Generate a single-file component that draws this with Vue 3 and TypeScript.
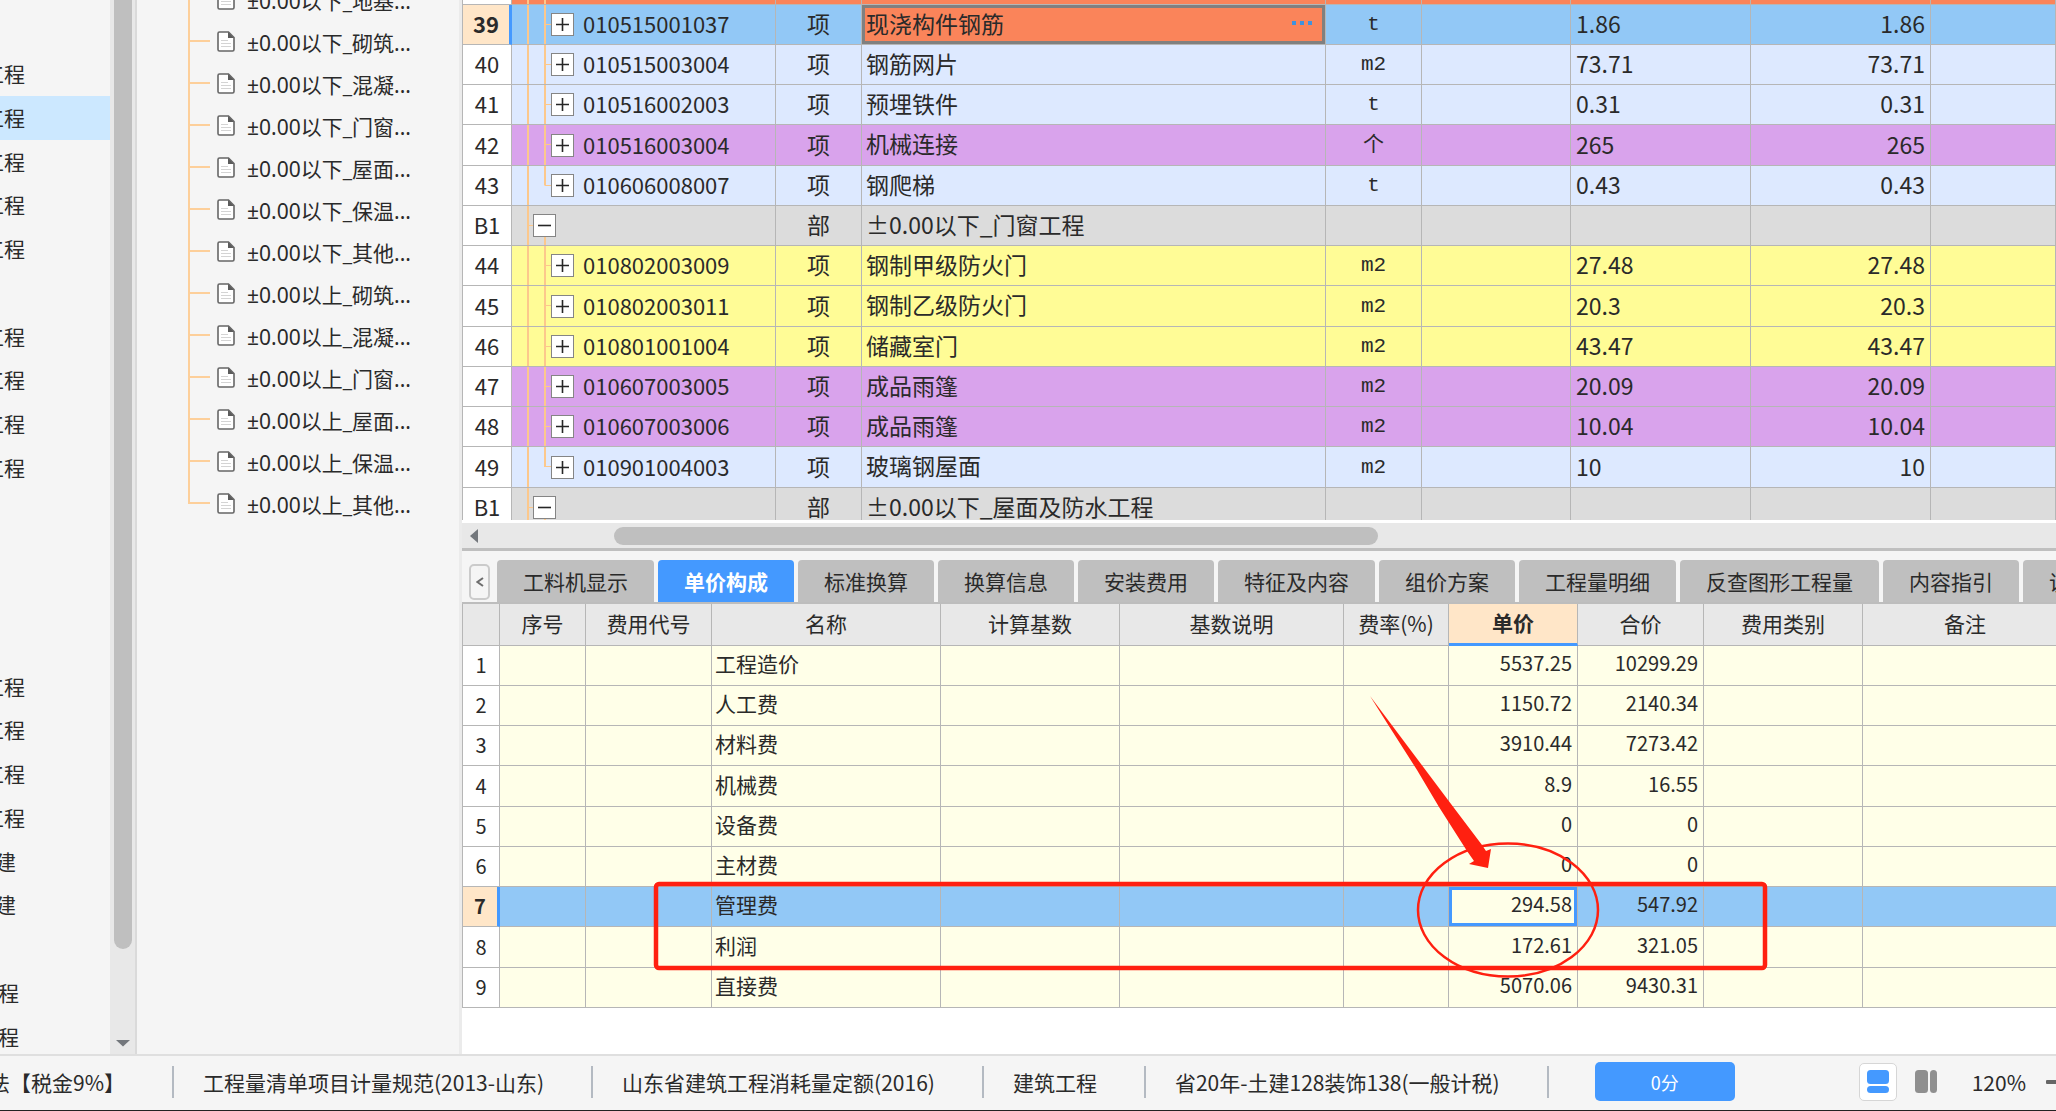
<script setup lang="ts">
type Tone = 'orange' | 'active' | 'blue' | 'purple' | 'yellow' | 'group'

interface BillRow {
  no: string
  tone: Tone
  code: string
  kind: string
  name: string
  unit: string
  qty: string
  last?: boolean
}

interface FeeRow {
  name: string
  price: string
  total: string
}

const projectRows: string[] = [
  '工程', '工程', '工程', '工程', '工程', '',
  '工程', '工程', '工程', '工程', '', '', '', '',
  '工程', '工程', '工程', '工程', '建', '建', '', '程', '程',
]
const selectedProject = 1
const projectClass = (t: string): string => (t === '建' ? 'cut-build' : t === '程' ? 'cut-tail' : 'cut-full')

const sections: string[] = [
  '±0.00以下_地基...', '±0.00以下_砌筑...', '±0.00以下_混凝...', '±0.00以下_门窗...',
  '±0.00以下_屋面...', '±0.00以下_保温...', '±0.00以下_其他...', '±0.00以上_砌筑...',
  '±0.00以上_混凝...', '±0.00以上_门窗...', '±0.00以上_屋面...', '±0.00以上_保温...',
  '±0.00以上_其他...',
]

const bill: BillRow[] = [
  { no: '', tone: 'orange', code: '', kind: '', name: '', unit: '', qty: '' },
  { no: '39', tone: 'active', code: '010515001037', kind: '项', name: '现浇构件钢筋', unit: 't', qty: '1.86' },
  { no: '40', tone: 'blue', code: '010515003004', kind: '项', name: '钢筋网片', unit: 'm2', qty: '73.71' },
  { no: '41', tone: 'blue', code: '010516002003', kind: '项', name: '预埋铁件', unit: 't', qty: '0.31' },
  { no: '42', tone: 'purple', code: '010516003004', kind: '项', name: '机械连接', unit: '个', qty: '265' },
  { no: '43', tone: 'blue', code: '010606008007', kind: '项', name: '钢爬梯', unit: 't', qty: '0.43', last: true },
  { no: 'B1', tone: 'group', code: '', kind: '部', name: '±0.00以下_门窗工程', unit: '', qty: '' },
  { no: '44', tone: 'yellow', code: '010802003009', kind: '项', name: '钢制甲级防火门', unit: 'm2', qty: '27.48' },
  { no: '45', tone: 'yellow', code: '010802003011', kind: '项', name: '钢制乙级防火门', unit: 'm2', qty: '20.3' },
  { no: '46', tone: 'yellow', code: '010801001004', kind: '项', name: '储藏室门', unit: 'm2', qty: '43.47' },
  { no: '47', tone: 'purple', code: '010607003005', kind: '项', name: '成品雨篷', unit: 'm2', qty: '20.09' },
  { no: '48', tone: 'purple', code: '010607003006', kind: '项', name: '成品雨篷', unit: 'm2', qty: '10.04' },
  { no: '49', tone: 'blue', code: '010901004003', kind: '项', name: '玻璃钢屋面', unit: 'm2', qty: '10', last: true },
  { no: 'B1', tone: 'group', code: '', kind: '部', name: '±0.00以下_屋面及防水工程', unit: '', qty: '' },
]

const tabs: string[] = [
  '工料机显示', '单价构成', '标准换算', '换算信息', '安装费用', '特征及内容',
  '组价方案', '工程量明细', '反查图形工程量', '内容指引', '说明信息',
]
const activeTab = 1

const feeHeads: string[] = [
  '序号', '费用代号', '名称', '计算基数', '基数说明', '费率(%)', '单价', '合价', '费用类别', '备注',
]
const fees: FeeRow[] = [
  { name: '工程造价', price: '5537.25', total: '10299.29' },
  { name: '人工费', price: '1150.72', total: '2140.34' },
  { name: '材料费', price: '3910.44', total: '7273.42' },
  { name: '机械费', price: '8.9', total: '16.55' },
  { name: '设备费', price: '0', total: '0' },
  { name: '主材费', price: '0', total: '0' },
  { name: '管理费', price: '294.58', total: '547.92' },
  { name: '利润', price: '172.61', total: '321.05' },
  { name: '直接费', price: '5070.06', total: '9430.31' },
]
const activeFee = 6
</script>

<template>
  <div class="app">
    <div class="workspace">
      <nav class="projects">
        <ul>
          <li v-for="(p, i) in projectRows" :key="i" :class="{ on: i === selectedProject }">
            <span :class="projectClass(p)">{{ p }}</span>
          </li>
        </ul>
        <div class="vbar">
          <div class="vthumb"></div>
          <svg width="14" height="8" viewBox="0 0 14 8"><path d="M0 1H14L7 7.500Z" fill="#73777c" /></svg>
        </div>
      </nav>

      <nav class="sections">
        <ul>
          <li v-for="(s, i) in sections" :key="i">
            <svg class="doc" width="18" height="21" viewBox="0 0 18 21">
              <path d="M2.500 1H11.500L17 6.500V18.500Q17 20 15.500 20H2.500Q1 20 1 18.500V2.500Q1 1 2.500 1Z" fill="#fff" stroke="#666" stroke-width="1.600" />
              <path d="M11 1V7H17Z" fill="#5c5c5c" />
              <path d="M4 9.500H11M4 12.500H14M4 15.500H14" stroke="#d4d4d4" stroke-width="1.200" />
            </svg>
            <span>{{ s }}</span>
          </li>
        </ul>
      </nav>

      <main class="main">
        <section class="upper">
          <table class="grid bill">
            <colgroup>
              <col class="b-no" /><col class="b-code" /><col class="b-kind" /><col class="b-name" />
              <col class="b-unit" /><col class="b-gap" /><col class="b-qty" /><col class="b-qty" /><col />
            </colgroup>
            <tbody>
              <tr v-for="(r, i) in bill" :key="i" :class="r.tone">
                <th scope="row">{{ r.no }}</th>
                <td class="tree" :class="{ last: r.last }">
                  <div v-if="r.no" class="node">
                    <button type="button" class="toggle" :aria-label="r.tone === 'group' ? '折叠' : '展开'">
                      <svg width="13" height="13" viewBox="0 0 13 13">
                        <path :d="r.tone === 'group' ? 'M0 6.500H13' : 'M0 6.500H13M6.500 0V13'" stroke="#262626" stroke-width="1.600" />
                      </svg>
                    </button>
                    <span>{{ r.code }}</span>
                  </div>
                </td>
                <td class="mid">{{ r.kind }}</td>
                <td class="name">
                  <div class="namebox">
                    <span>{{ r.name }}</span>
                    <button v-if="r.tone === 'active'" type="button" class="more" aria-label="更多">
                      <svg width="20" height="4" viewBox="0 0 20 4"><path d="M0 0h4v4H0ZM8 0h4v4H8ZM16 0h4v4H16Z" fill="#3f92dd" /></svg>
                    </button>
                  </div>
                </td>
                <td class="mid unit">{{ r.unit }}</td>
                <td></td>
                <td class="num-l">{{ r.qty }}</td>
                <td class="num-r">{{ r.qty }}</td>
                <td></td>
              </tr>
            </tbody>
          </table>
        </section>

        <div class="hbar">
          <svg width="8" height="14" viewBox="0 0 8 14"><path d="M8 0V14L0 7Z" fill="#73777c" /></svg>
          <div class="hthumb"></div>
        </div>

        <section class="lower">
          <div class="tabs">
            <button type="button" class="prev" aria-label="向左">
              <svg width="8" height="10" viewBox="0 0 8 10"><path d="M7 1L1.500 5L7 9" fill="none" stroke="#6e6e6e" stroke-width="2" /></svg>
            </button>
            <button v-for="(t, i) in tabs" :key="t" type="button" class="tab" :class="{ on: i === activeTab }">{{ t }}</button>
          </div>
          <div class="fees">
            <table class="grid fee">
              <colgroup>
                <col class="f-no" /><col class="f-seq" /><col class="f-code" /><col class="f-name" /><col class="f-base" />
                <col class="f-desc" /><col class="f-rate" /><col class="f-price" /><col class="f-total" /><col class="f-type" /><col />
              </colgroup>
              <thead>
                <tr>
                  <th></th>
                  <th v-for="h in feeHeads" :key="h" scope="col" :class="{ on: h === '单价' }">{{ h }}</th>
                </tr>
              </thead>
              <tbody>
                <tr v-for="(f, i) in fees" :key="i" :class="{ active: i === activeFee }">
                  <th scope="row">{{ i + 1 }}</th>
                  <td></td><td></td>
                  <td class="fname">{{ f.name }}</td>
                  <td></td><td></td><td></td>
                  <td class="amount" :class="{ focus: i === activeFee }">{{ f.price }}</td>
                  <td class="amount">{{ f.total }}</td>
                  <td></td><td></td>
                </tr>
              </tbody>
            </table>
            <svg class="marks" width="1320" height="400" viewBox="0 0 1320 400">
              <rect x="194" y="280" width="1109" height="84" rx="3" fill="none" stroke="#ff2010" stroke-width="4.500" />
              <ellipse cx="1046" cy="306" rx="90" ry="66.500" fill="none" stroke="#ff2010" stroke-width="2.500" />
              <path d="M908 92L986 196L1020 241L1024 247L1029 245L1026 264L1007 260L1012 257L1005 247L977 203L955 166L925 119Z" fill="#ff2010" />
            </svg>
          </div>
        </section>
      </main>
    </div>

    <footer class="status">
      <span class="cell first">法【税金9%】</span>
      <span class="cell">工程量清单项目计量规范(2013-山东)</span>
      <span class="cell">山东省建筑工程消耗量定额(2016)</span>
      <span class="cell">建筑工程</span>
      <span class="cell">省20年-土建128装饰138(一般计税)</span>
      <button type="button" class="score">0分</button>
      <div class="tools">
        <button type="button" class="view on" aria-label="上下布局">
          <svg width="22" height="24" viewBox="0 0 22 24"><rect x="0" y="0" width="22" height="14" rx="3.500" fill="#4499ff" /><rect x="0" y="16" width="22" height="7" rx="3.500" fill="#4499ff" /></svg>
        </button>
        <button type="button" class="view" aria-label="左右布局">
          <svg width="22" height="24" viewBox="0 0 22 24"><rect x="0" y="0" width="13" height="23" rx="3.500" fill="#8f8f8f" /><rect x="15" y="0" width="7" height="23" rx="3.500" fill="#8f8f8f" /></svg>
        </button>
        <span class="zoom">120%</span>
        <button type="button" class="minus" aria-label="缩小">
          <svg width="20" height="4" viewBox="0 0 20 4"><rect width="20" height="4" rx="1" fill="#666" /></svg>
        </button>
      </div>
    </footer>
  </div>
</template>

<style>
body {
  overflow: hidden;
}
</style>

<style scoped>
* {
  box-sizing: border-box;
}

.app {
  display: flex;
  flex-direction: column;
  height: 100vh;
  overflow: hidden;
  background: #f5f5f5;
  color: #2a2a2a;
  font-family: "Noto Sans CJK SC", "Noto Sans", sans-serif;
  font-size: 21px;
  line-height: 32px;
}

button {
  margin: 0;
  padding: 0;
  border: 0;
  background: none;
  color: inherit;
  font: inherit;
}

svg {
  display: block;
}

ul {
  margin: 0;
  padding: 0;
  list-style: none;
}

.workspace {
  display: flex;
  flex: 1;
  min-height: 0;
}

/* project list, scrolled sideways so only the end of each name shows */
.projects {
  display: flex;
  flex: none;
  width: 137px;
  overflow: hidden;
  border-right: 2px solid #dadada;
}

.projects ul {
  flex: 1;
  padding-top: 52px;
}

.projects li {
  display: flex;
  align-items: center;
  height: 44px;
  padding-bottom: 3px;
  overflow: hidden;
  white-space: nowrap;
}

.projects li:nth-child(4n) {
  height: 43px;
}

.projects li.on {
  background: #cce8ff;
}

.cut-full {
  margin-left: -17px;
}

.cut-build {
  margin-left: -5px;
}

.cut-tail {
  margin-left: -2px;
}

.vbar {
  display: flex;
  flex-direction: column;
  align-items: center;
  justify-content: space-between;
  width: 25px;
  padding-bottom: 7px;
  background: #e8e8e8;
}

.vthumb {
  width: 18px;
  height: 90.6%;
  border-radius: 0 0 9px 9px;
  background: #bfbfbf;
}

.sections {
  flex: none;
  width: 325px;
  overflow: hidden;
  border-right: 3px solid #ebebeb;
  font-family: "Noto Sans", "Noto Sans CJK SC", sans-serif;
}

.sections ul {
  margin-top: -22px;
  padding-left: 51px;
}

.sections li {
  display: flex;
  align-items: center;
  gap: 12px;
  height: 42px;
  padding-left: 29px;
  white-space: nowrap;
  background:
    linear-gradient(#fdcf9a, #fdcf9a) 0 0 / 2px 100% no-repeat,
    linear-gradient(#fdcf9a, #fdcf9a) 0 50% / 22px 2px no-repeat;
}

.sections li:last-child {
  background-size: 2px 50%, 22px 2px;
}

.sections li span {
  padding-top: 4px;
}

.main {
  display: flex;
  flex: 1;
  flex-direction: column;
  min-width: 0;
  background: #fff;
}

.grid {
  width: 100%;
  table-layout: fixed;
  border-collapse: separate;
  border-spacing: 0;
}

.grid th,
.grid td {
  height: 40px;
  padding: 0 0 3px;
  border-right: 1px solid #b6b6b6;
  border-bottom: 1px solid #b6b6b6;
  font-weight: 400;
  white-space: nowrap;
}

.grid tr > :first-child {
  border-left: 1px solid #b6b6b6;
}

.upper {
  flex: 1;
  min-height: 0;
  overflow: hidden;
}

.bill {
  margin-top: -36px;
  font-size: 23px;
}

.b-no { width: 50px; }
.b-code { width: 264px; }
.b-kind { width: 86px; }
.b-name { width: 464px; }
.b-unit { width: 96px; }
.b-gap { width: 149px; }
.b-qty { width: 180px; }

.bill tr:nth-child(4n + 1) > * {
  height: 41px;
}

.bill th {
  background: #fff;
  font-size: 22px;
}

.bill .active th {
  border-right: 3px solid #4499ff;
  background: #ffe6c8;
  font-weight: 700;
}

.orange td { background-color: #fa845a; }
.active td { background-color: #92c8f6; }
.blue td { background-color: #dde9ff; }
.purple td { background-color: #d9a3ec; }
.yellow td { background-color: #fffc96; }
.group td { background-color: #dcdcdc; }

.bill .tree {
  padding: 0;
  font-size: 22px;
  background-image: linear-gradient(#fcc88c, #fcc88c), linear-gradient(#fcc88c, #fcc88c), linear-gradient(#fcc88c, #fcc88c);
  background-repeat: no-repeat;
  background-position: 15px 0, 32px 0, 33px 19px;
  background-size: 2px 100%, 2px 100%, 6px 1px;
}

.bill .tree.last {
  background-size: 2px 100%, 2px 50%, 6px 1px;
}

.bill .group .tree {
  background-position: 15px 0, 32px 100%, 15px 19px;
  background-size: 2px 100%, 2px 8px, 6px 1px;
}

.bill .orange .tree {
  background-size: 2px 100%, 2px 100%, 0 0;
}

.node {
  display: flex;
  align-items: center;
  gap: 9px;
  padding-left: 39px;
}

.node span {
  padding-bottom: 3px;
}

.group .node {
  padding-left: 21px;
}

.toggle {
  display: grid;
  place-items: center;
  width: 23px;
  height: 23px;
  border: 1px solid #858585;
  background: #fff;
}

.mid {
  text-align: center;
}

.bill .unit {
  padding: 1px 0 0;
  font-family: "Liberation Mono", "Noto Sans CJK SC", monospace;
  font-size: 21px;
}

.bill .name {
  padding: 0;
}

.namebox {
  display: flex;
  align-items: center;
  justify-content: space-between;
  height: 36px;
  padding: 0 13px 4px 4px;
}

.bill .active .name {
  background: #fa845a;
  box-shadow: inset 0 0 0 3px #808080;
}

.bill .num-l {
  padding-left: 5px;
}

.bill .num-r {
  padding-right: 5px;
  text-align: right;
}

.hbar {
  display: flex;
  flex: none;
  align-items: center;
  height: 31px;
  padding-left: 8px;
  border-top: 3px solid #fff;
  border-bottom: 3px solid #bfbfbf;
  background: #e8e8e8;
}

.hthumb {
  width: 48.2%;
  height: 18px;
  margin-left: 136px;
  border-radius: 9px;
  background: #bfbfbf;
}

.lower {
  flex: none;
  padding-bottom: 46px;
}

.tabs {
  display: flex;
  align-items: flex-end;
  gap: 4px;
  height: 51px;
  padding-left: 7px;
  overflow: hidden;
  background: #f5f5f5;
}

.prev {
  display: grid;
  flex: none;
  place-items: center;
  width: 21px;
  height: 36px;
  margin: 0 3px 2px 0;
  border: 2px solid #cbcbcb;
  border-radius: 5px;
}

.tab {
  flex: none;
  height: 42px;
  padding: 0 26px 1px;
  border-radius: 4px 4px 0 0;
  background: #bfbfbf;
  white-space: nowrap;
}

.tab.on {
  background: #4499ff;
  color: #fff;
  font-weight: 700;
}

.fees {
  position: relative;
  overflow: hidden;
  border-top: 2px solid #bdbdbd;
}

.fee {
  width: calc(100% + 12px);
}

.f-no { width: 38px; }
.f-seq { width: 86px; }
.f-code { width: 126px; }
.f-name { width: 229px; }
.f-base { width: 179px; }
.f-desc { width: 224px; }
.f-rate { width: 105px; }
.f-price { width: 129px; }
.f-total { width: 126px; }
.f-type { width: 159px; }

.fee thead th {
  height: 42px;
  background: #e8e8e8;
}

.fee thead th.on {
  border-bottom: 3px solid #4499ff;
  background: #ffe6c8;
  font-weight: 700;
}

.fee tbody th {
  padding-bottom: 1px;
  background: #fff;
  font-size: 20px;
}

.fee tbody td {
  background: #ffffe8;
}

.fee tbody tr:nth-child(4n) > * {
  height: 41px;
}

.fee tbody .active td {
  background: #92c8f6;
}

.fee tbody .active th {
  border-right: 3px solid #4499ff;
  background: #ffe6c8;
  font-weight: 700;
}

.fee .fname {
  padding: 0 0 5px 3px;
}

.fee .amount {
  padding: 0 5px 5px 0;
  font-size: 20px;
  text-align: right;
}

.fee tbody .active .focus {
  background: #ffffe8;
  box-shadow: inset 0 0 0 3px #4499ff;
}

.marks {
  position: absolute;
  top: 0;
  left: 0;
  pointer-events: none;
}

.status {
  display: flex;
  flex: none;
  align-items: center;
  height: 57px;
  padding-bottom: 3px;
  border-top: 2px solid #dfdfdf;
  border-bottom: 1px solid #222;
  overflow: hidden;
  white-space: nowrap;
}

.cell {
  margin-right: 29px;
  padding-right: 47px;
  border-right: 2px solid #b4bac2;
}

.cell.first {
  margin-left: -11px;
}

.score {
  flex: none;
  width: 140px;
  height: 39px;
  margin-left: 17px;
  border-radius: 5px;
  background: #4499ff;
  color: #fff;
  font-size: 18px;
}

.tools {
  display: flex;
  align-items: center;
  margin: 0 -10px 0 auto;
}

.view {
  display: grid;
  place-items: center;
  width: 38px;
  height: 38px;
  margin-right: 10px;
  border: 1px solid transparent;
  border-radius: 5px;
}

.view.on {
  border-color: #d6d6d6;
  background: #fff;
}

.zoom {
  margin: 0 20px 0 17px;
}
</style>
